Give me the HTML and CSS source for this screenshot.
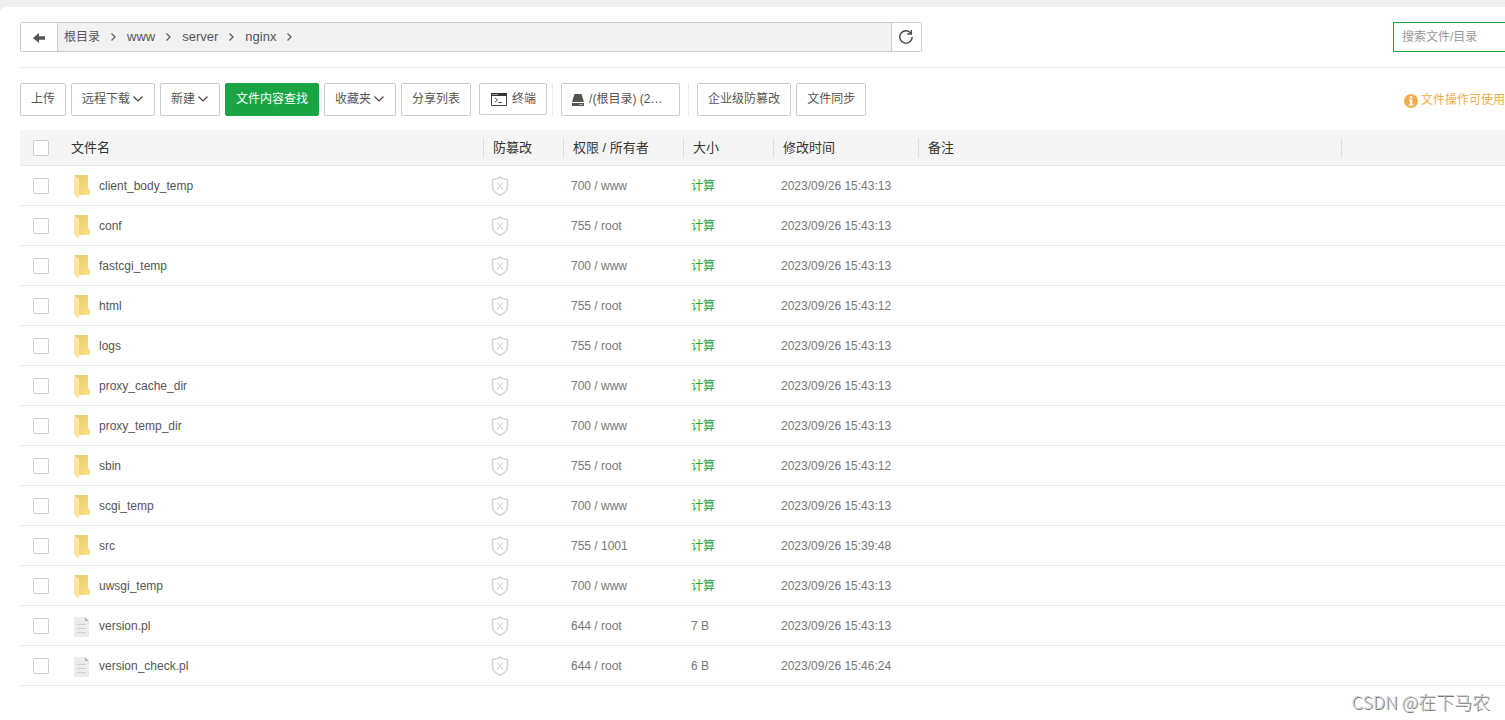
FILE: index.html
```html
<!DOCTYPE html>
<html lang="zh-CN">
<head>
<meta charset="utf-8">
<title>文件管理</title>
<link rel="stylesheet" href="styles.css">
</head>
<body>
<svg class="sprite" aria-hidden="true">
  <defs>
    <linearGradient id="fold-back" x1="0" y1="0" x2="1" y2="1"><stop offset="0" stop-color="#e9c766"/><stop offset="1" stop-color="#fce28a"/></linearGradient>
    <linearGradient id="fold-front" x1="0" y1="0" x2="0" y2="1"><stop offset="0" stop-color="#fdeaab"/><stop offset="1" stop-color="#fce294"/></linearGradient>
  </defs>
  <symbol id="i-folder" viewBox="0 0 18 24">
    <path d="M1 0H15V13L17 15V20H5L1 18Z" fill="url(#fold-back)"/>
    <path d="M1 0L6 4V24L1 19.500Z" fill="url(#fold-front)"/>
  </symbol>
  <symbol id="i-file" viewBox="0 0 16 20">
    <path d="M1 0H11L15 4V20H1Q0 20 0 19V1Q0 0 1 0Z" fill="#ececec"/>
    <path d="M11 0L15 4H11Z" fill="#b5b5b5"/>
    <path d="M3 7.500H12M3 11.500H12M3 15.500H12" stroke="#cfcfcf" fill="none"/>
  </symbol>
  <symbol id="i-shield" viewBox="0 0 18 20">
    <path d="M9 1C7 2.600 4.500 3.500 1.500 3.600V10C1.500 14.500 4.500 17.500 9 19.200C13.500 17.500 16.500 14.500 16.500 10V3.600C13.500 3.500 11 2.600 9 1Z" fill="none" stroke="#d4d4d4" stroke-width="1.500"/>
    <path d="M6 6.500L12 13.500M12 6.500L6 13.500" fill="none" stroke="#d0d0d0" stroke-width="1.100"/>
  </symbol>
  <symbol id="i-next" viewBox="0 0 5 10"><path d="M0.500 1.500L4 5L0.500 8.500" fill="none" stroke="#666" stroke-width="1.400"/></symbol>
  <symbol id="i-down" viewBox="0 0 10 6"><path d="M0.500 0.500L5 5L9.500 0.500" fill="none" stroke="#444" stroke-width="1.200"/></symbol>
</svg>
<main class="panel">
  <header class="topbar">
    <nav class="path">
      <button class="path-btn back" aria-label="返回"><svg width="12" height="10" viewBox="0 0 12 10"><path d="M0 5L6 0V3.300H12V6.700H6V10Z" fill="#555"/></svg></button>
      <div class="crumbs">
        <a href="#" class="root">根目录</a><svg class="next"><use href="#i-next"/></svg>
        <a href="#">www</a><svg class="next"><use href="#i-next"/></svg>
        <a href="#">server</a><svg class="next"><use href="#i-next"/></svg>
        <a href="#">nginx</a><svg class="next"><use href="#i-next"/></svg>
      </div>
      <button class="path-btn reload" aria-label="刷新"><svg width="14" height="14" viewBox="0 0 14 14"><path d="M11.800 3A6.200 6.200 0 1 0 13.200 7" fill="none" stroke="#444" stroke-width="1.400"/><path d="M12.300 0V4H8.300" fill="none" stroke="#444" stroke-width="1.300"/></svg></button>
    </nav>
    <input class="search" type="text" placeholder="搜索文件/目录" aria-label="搜索文件/目录">
  </header>
  <div class="toolbar">
    <div class="group">
      <button class="btn">上传</button>
      <button class="btn">远程下载<svg class="down"><use href="#i-down"/></svg></button>
      <button class="btn">新建<svg class="down"><use href="#i-down"/></svg></button>
      <button class="btn primary">文件内容查找</button>
      <button class="btn">收藏夹<svg class="down"><use href="#i-down"/></svg></button>
      <button class="btn">分享列表</button>
    </div>
    <div class="group terminal">
      <button class="btn short"><svg class="term" width="16" height="13" viewBox="0 0 16 13"><path d="M0.500 0.500H15.500V12.500H0.500Z" fill="#fff" stroke="#444"/><path d="M0 0H16V3H0Z" fill="#333"/><path d="M1.500 1.500H2.500M3.500 1.500H4.500M5.500 1.500H6.500" stroke="#fff"/><path d="M4 4.800L6.500 7L4 9.200M7.500 9.500H11" fill="none" stroke="#444"/></svg>终端</button>
    </div>
    <div class="group divided">
      <button class="btn disk"><svg width="12" height="12" viewBox="0 0 12 12"><path d="M2.500 0H9.500L12 8H0Z" fill="#555"/><path d="M0 9H12V12H0Z" fill="#555"/><path d="M7.500 10.500H8.500M9.500 10.500H10.500" stroke="#fff"/></svg>/(根目录) (2…</button>
    </div>
    <div class="group divided">
      <button class="btn">企业级防篡改</button>
      <button class="btn">文件同步</button>
    </div>
    <div class="tip"><svg width="14" height="14" viewBox="0 0 14 14"><circle cx="7" cy="7" r="7" fill="#f0ad4e"/><path d="M5.800 2.300H8.300V4.500H5.800ZM5 5.600H8.300V10H9.300V11.500H5V10H6V7H5Z" fill="#fff"/></svg>文件操作可使用</div>
  </div>
  <table class="files">
    <colgroup><col class="c-check"><col class="c-name"><col class="c-lock"><col class="c-perm"><col class="c-size"><col class="c-time"><col class="c-note"><col></colgroup>
    <thead><tr><th><input type="checkbox" aria-label="全选"></th><th>文件名</th><th class="sep">防篡改</th><th class="sep">权限 / 所有者</th><th class="sep">大小</th><th class="sep">修改时间</th><th class="sep">备注</th><th class="sep"></th></tr></thead>
    <tbody>
      <tr><td><input type="checkbox" aria-label="client_body_temp"></td><td><a class="name" href="#"><svg class="folder"><use href="#i-folder"/></svg>client_body_temp</a></td><td><svg class="shield"><use href="#i-shield"/></svg></td><td>700 / www</td><td><a class="calc" href="#">计算</a></td><td>2023/09/26 15:43:13</td><td></td><td></td></tr>
      <tr><td><input type="checkbox" aria-label="conf"></td><td><a class="name" href="#"><svg class="folder"><use href="#i-folder"/></svg>conf</a></td><td><svg class="shield"><use href="#i-shield"/></svg></td><td>755 / root</td><td><a class="calc" href="#">计算</a></td><td>2023/09/26 15:43:13</td><td></td><td></td></tr>
      <tr><td><input type="checkbox" aria-label="fastcgi_temp"></td><td><a class="name" href="#"><svg class="folder"><use href="#i-folder"/></svg>fastcgi_temp</a></td><td><svg class="shield"><use href="#i-shield"/></svg></td><td>700 / www</td><td><a class="calc" href="#">计算</a></td><td>2023/09/26 15:43:13</td><td></td><td></td></tr>
      <tr><td><input type="checkbox" aria-label="html"></td><td><a class="name" href="#"><svg class="folder"><use href="#i-folder"/></svg>html</a></td><td><svg class="shield"><use href="#i-shield"/></svg></td><td>755 / root</td><td><a class="calc" href="#">计算</a></td><td>2023/09/26 15:43:12</td><td></td><td></td></tr>
      <tr><td><input type="checkbox" aria-label="logs"></td><td><a class="name" href="#"><svg class="folder"><use href="#i-folder"/></svg>logs</a></td><td><svg class="shield"><use href="#i-shield"/></svg></td><td>755 / root</td><td><a class="calc" href="#">计算</a></td><td>2023/09/26 15:43:13</td><td></td><td></td></tr>
      <tr><td><input type="checkbox" aria-label="proxy_cache_dir"></td><td><a class="name" href="#"><svg class="folder"><use href="#i-folder"/></svg>proxy_cache_dir</a></td><td><svg class="shield"><use href="#i-shield"/></svg></td><td>700 / www</td><td><a class="calc" href="#">计算</a></td><td>2023/09/26 15:43:13</td><td></td><td></td></tr>
      <tr><td><input type="checkbox" aria-label="proxy_temp_dir"></td><td><a class="name" href="#"><svg class="folder"><use href="#i-folder"/></svg>proxy_temp_dir</a></td><td><svg class="shield"><use href="#i-shield"/></svg></td><td>700 / www</td><td><a class="calc" href="#">计算</a></td><td>2023/09/26 15:43:13</td><td></td><td></td></tr>
      <tr><td><input type="checkbox" aria-label="sbin"></td><td><a class="name" href="#"><svg class="folder"><use href="#i-folder"/></svg>sbin</a></td><td><svg class="shield"><use href="#i-shield"/></svg></td><td>755 / root</td><td><a class="calc" href="#">计算</a></td><td>2023/09/26 15:43:12</td><td></td><td></td></tr>
      <tr><td><input type="checkbox" aria-label="scgi_temp"></td><td><a class="name" href="#"><svg class="folder"><use href="#i-folder"/></svg>scgi_temp</a></td><td><svg class="shield"><use href="#i-shield"/></svg></td><td>700 / www</td><td><a class="calc" href="#">计算</a></td><td>2023/09/26 15:43:13</td><td></td><td></td></tr>
      <tr><td><input type="checkbox" aria-label="src"></td><td><a class="name" href="#"><svg class="folder"><use href="#i-folder"/></svg>src</a></td><td><svg class="shield"><use href="#i-shield"/></svg></td><td>755 / 1001</td><td><a class="calc" href="#">计算</a></td><td>2023/09/26 15:39:48</td><td></td><td></td></tr>
      <tr><td><input type="checkbox" aria-label="uwsgi_temp"></td><td><a class="name" href="#"><svg class="folder"><use href="#i-folder"/></svg>uwsgi_temp</a></td><td><svg class="shield"><use href="#i-shield"/></svg></td><td>700 / www</td><td><a class="calc" href="#">计算</a></td><td>2023/09/26 15:43:13</td><td></td><td></td></tr>
      <tr><td><input type="checkbox" aria-label="version.pl"></td><td><a class="name" href="#"><svg class="file"><use href="#i-file"/></svg>version.pl</a></td><td><svg class="shield"><use href="#i-shield"/></svg></td><td>644 / root</td><td>7 B</td><td>2023/09/26 15:43:13</td><td></td><td></td></tr>
      <tr><td><input type="checkbox" aria-label="version_check.pl"></td><td><a class="name" href="#"><svg class="file"><use href="#i-file"/></svg>version_check.pl</a></td><td><svg class="shield"><use href="#i-shield"/></svg></td><td>644 / root</td><td>6 B</td><td>2023/09/26 15:46:24</td><td></td><td></td></tr>
    </tbody>
  </table>
  <footer class="credit">CSDN @在下马农</footer>
</main>
</body>
</html>
```
FILE: styles.css
```css
* { box-sizing: border-box; }
body {
  margin: 0;
  padding-top: 7px;
  background: #f0f0f0;
  color: #555;
  font: 12px/18px "Liberation Sans", "Noto Sans CJK SC", sans-serif;
}
button, input { font: inherit; color: inherit; }
a { color: inherit; text-decoration: none; }
svg { flex: none; }
.sprite { position: absolute; width: 0; height: 0; }
.panel {
  min-height: calc(100vh - 7px);
  padding: 15px 0 0 20px;
  background: #fff;
  border-radius: 6px 0 0 0;
  overflow: hidden;
}
.topbar {
  display: flex;
  justify-content: space-between;
  padding-bottom: 15px;
  border-bottom: 1px solid #ececec;
}
.path {
  display: flex;
  width: 60.75%;
  height: 30px;
  border: 1px solid #ccc;
  border-radius: 2px;
}
.path-btn {
  display: flex;
  align-items: center;
  justify-content: center;
  padding: 0;
  border: 0;
  background: #fff;
}
.back { width: 37px; border-right: 1px solid #ccc; padding-top: 2px; }
.reload { width: 30px; border-left: 1px solid #ccc; padding-right: 1px; }
.crumbs {
  display: flex;
  flex: 1;
  align-items: center;
  gap: 11px;
  padding-left: 6px;
  background: #f2f2f2;
  font-size: 13px;
}
.root { font-size: 12px; }
.next { width: 5px; height: 10px; }
.search {
  width: 112px;
  height: 30px;
  padding: 0 8px;
  border: 1px solid #20a53a;
  border-right: 0;
  background: #fff;
}
.search::placeholder { color: #999; opacity: 1; }
.toolbar { display: flex; padding: 15px 0 14px; }
.group { display: flex; gap: 5px; align-items: flex-start; }
.btn {
  display: flex;
  align-items: center;
  height: 33px;
  padding: 0 10px 2px;
  border: 1px solid #ccc;
  border-radius: 2px;
  background: #fff;
  white-space: nowrap;
}
.primary { border-color: #1aa544; background: #1aa544; color: #fff; }
.down { width: 10px; height: 6px; margin: 0 1px 0 3px; }
.terminal { margin-left: 8px; }
.short { height: 32px; padding: 0 10px 1px 11px; }
.term { margin: 2px 5px 0 0; }
.divided { margin-left: 5px; padding-left: 8px; border-left: 1px solid #ececec; }
.divided + .divided { margin-left: 8px; }
.disk { width: 119px; gap: 5px; }
.disk svg { margin-top: 3px; }
.tip {
  display: flex;
  align-items: center;
  gap: 3px;
  margin-left: auto;
  color: #f0ad4e;
  white-space: nowrap;
}
.tip svg { margin-top: 3px; }
.files { width: 100%; table-layout: fixed; border-collapse: separate; border-spacing: 0; }
.c-check { width: 41px; }
.c-name { width: 422px; }
.c-lock { width: 80px; }
.c-perm { width: 120px; }
.c-size { width: 90px; }
.c-time { width: 145px; }
.c-note { width: 423px; }
th {
  height: 36px;
  padding: 0 10px;
  border-bottom: 1px solid #e8e8e8;
  background: #f5f5f5 no-repeat left center / 1px 20px;
  color: #333;
  font-size: 13px;
  font-weight: 400;
  text-align: left;
}
.sep { background-image: linear-gradient(#ddd, #ddd); }
td {
  height: 40px;
  padding: 1px 8px 0;
  border-bottom: 1px solid #e8e8e8;
  color: #777;
}
th:first-child, td:first-child { padding-left: 13px; padding-right: 0; }
td:nth-child(2) { padding-left: 12px; }
input[type="checkbox"] {
  display: block;
  appearance: none;
  width: 16px;
  height: 16px;
  margin: 0;
  border: 1px solid #ccc;
  border-radius: 2px;
  background: #fff;
}
.name { display: flex; align-items: center; color: #555; }
.folder { width: 18px; height: 24px; margin: 1px 8px 0 0; }
.file { width: 16px; height: 20px; margin: 1px 9px 0 1px; }
.shield { display: block; width: 18px; height: 20px; }
.calc { color: #20a53a; }
.credit {
  padding: 3px 15px 0 0;
  color: #ccc;
  font-family: "Noto Sans CJK SC", sans-serif;
  font-size: 18px;
  font-weight: 300;
  line-height: 24px;
  text-align: right;
  text-shadow: 1px 1px 0 #777;
}
```
